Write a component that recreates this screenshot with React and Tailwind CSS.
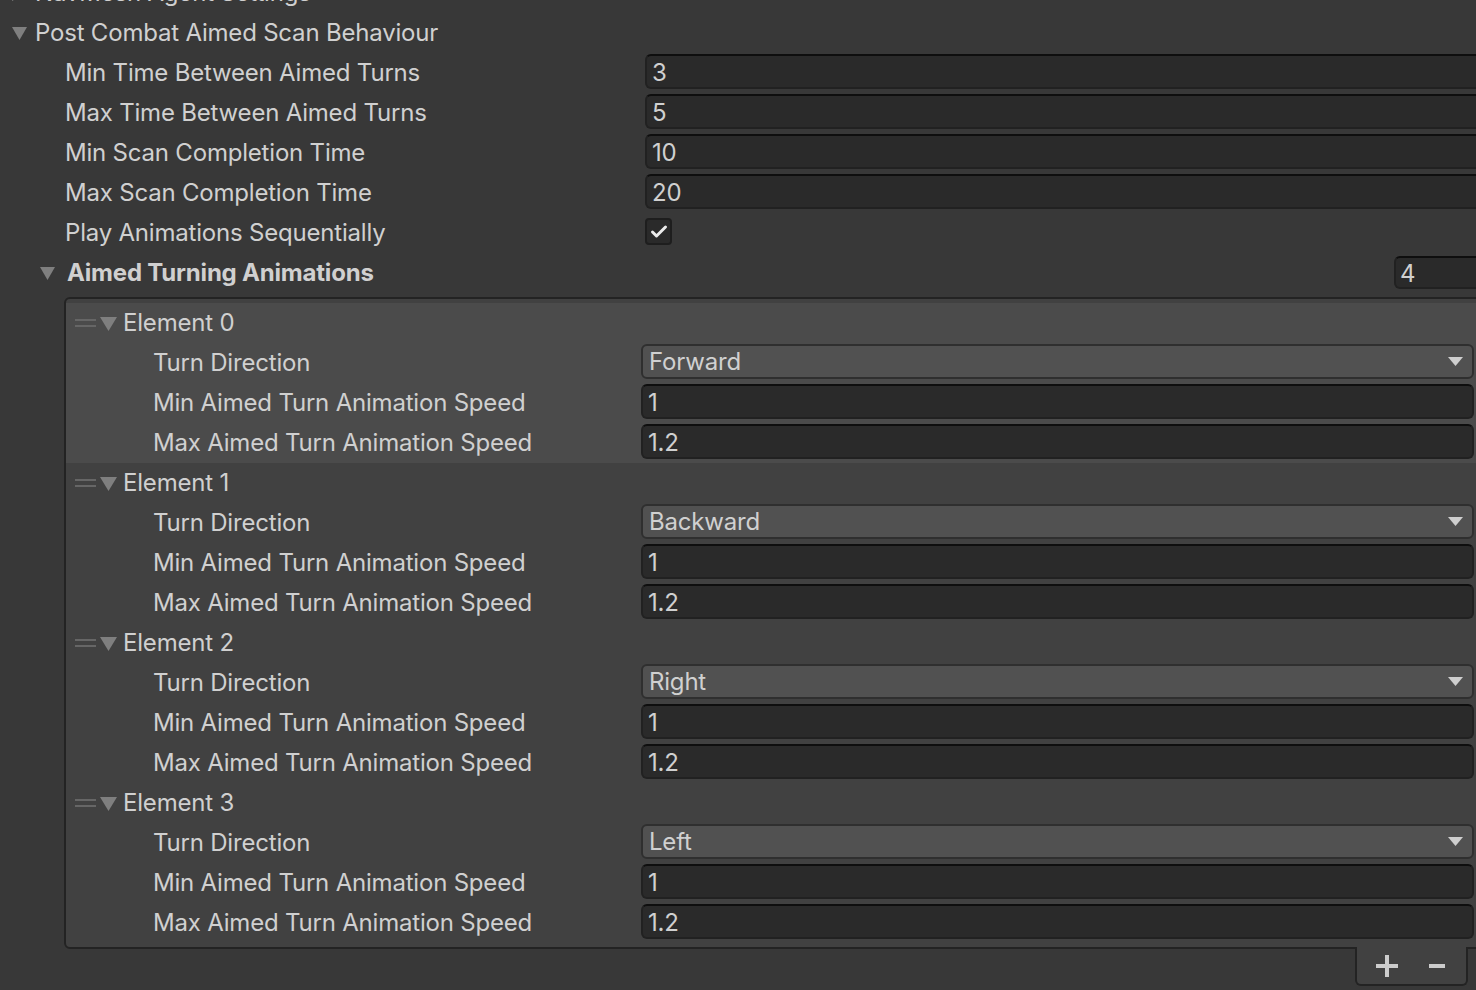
import React from "react";

const Tri = ({ className = "", w = 15, h = 13 }) => (
  <svg width={w} height={h} viewBox={`0 0 ${w} ${h}`} className={className}>
    <polygon points={`0,0 ${w},0 ${w / 2},${h}`} fill="#7f7f7f" />
  </svg>
);

const Handle = () => (
  <svg width="21" height="10" viewBox="0 0 21 10" className="shrink-0">
    <rect x="0" y="1" width="21" height="2" fill="#666666" />
    <rect x="0" y="7" width="21" height="2" fill="#666666" />
  </svg>
);

const Input = ({ value, className = "" }) => (
  <div
    className={
      "h-[35px] mt-[1px] rounded-[6px] bg-[#2a2a2a] border-2 border-[#212121] border-t-[#0e0e0e] pl-[5px] pt-[2px] flex items-center leading-none " +
      className
    }
  >
    {value}
  </div>
);

const Dropdown = ({ value }) => (
  <div className="h-[35px] mt-[1px] w-[833px] rounded-[6px] bg-[#515151] border-2 border-[#2f2f2f] pl-[6px] pr-[9px] flex items-center justify-between leading-none">
    <span className="pt-[1px]">{value}</span>
    <svg width="15" height="9" viewBox="0 0 15 9">
      <polygon points="0,0 15,0 7.5,9" fill="#cfcfcf" />
    </svg>
  </div>
);

const TopRow = ({ label, children }) => (
  <div className="h-[40px] flex items-start">
    <div className="w-[645px] shrink-0 pl-[65px] leading-[40px]">{label}</div>
    <div className="flex-1 -mr-[12px]">{children}</div>
  </div>
);

const ElemRow = ({ label, children }) => (
  <div className="h-[40px] flex items-start">
    <div className="w-[575px] shrink-0 pl-[87px] leading-[40px]">{label}</div>
    <div className="shrink-0">{children}</div>
  </div>
);

const Element = ({ idx, dir, selected }) => (
  <div className={selected ? "bg-[#4b4b4b]" : ""}>
    <div className="h-[40px] flex items-center">
      <div className="pl-[9px] flex items-center">
        <Handle />
        <Tri w={17} h={14} className="ml-[4px] mt-[1px]" />
        <span className="ml-[6px] leading-[40px]">Element {idx}</span>
      </div>
    </div>
    <ElemRow label="Turn Direction">
      <Dropdown value={dir} />
    </ElemRow>
    <ElemRow label="Min Aimed Turn Animation Speed">
      <Input value="1" className="w-[833px]" />
    </ElemRow>
    <ElemRow label="Max Aimed Turn Animation Speed">
      <Input value="1.2" className="w-[833px]" />
    </ElemRow>
  </div>
);

export default function App() {
  return (
    <div
      className="w-[1476px] h-[990px] bg-[#383838] overflow-hidden text-[24px] text-[#d0d0d0] tracking-[-0.2px]"
      style={{ fontFamily: "Inter, 'Noto Sans', sans-serif" }}
    >
      <div className="-mt-[27px]">
        <div className="h-[40px] flex items-center">
          <svg width="13" height="15" viewBox="0 0 13 15" className="ml-[12px]">
            <polygon points="0,0 13,7.5 0,15" fill="#7f7f7f" />
          </svg>
          <span className="ml-[10px] leading-[40px]">NavMesh Agent Settings</span>
        </div>
        <div className="h-[40px] flex items-center">
          <Tri className="ml-[12px] mt-[1px]" />
          <span className="ml-[8px] leading-[40px]">Post Combat Aimed Scan Behaviour</span>
        </div>
        <TopRow label="Min Time Between Aimed Turns">
          <Input value="3" />
        </TopRow>
        <TopRow label="Max Time Between Aimed Turns">
          <Input value="5" />
        </TopRow>
        <TopRow label="Min Scan Completion Time">
          <Input value="10" />
        </TopRow>
        <TopRow label="Max Scan Completion Time">
          <Input value="20" />
        </TopRow>
        <TopRow label="Play Animations Sequentially">
          <div className="mt-[5px] w-[27px] h-[27px] rounded-[4px] bg-[#2a2a2a] border-2 border-[#1e1e1e] flex items-center justify-center">
            <svg width="18" height="15" viewBox="0 0 18 15">
              <polyline
                points="2.5,8 6.5,12 15.5,3"
                fill="none"
                stroke="#ececec"
                strokeWidth="3"
                strokeLinecap="round"
                strokeLinejoin="round"
              />
            </svg>
          </div>
        </TopRow>
        <div className="h-[40px] flex items-start">
          <div className="flex items-center h-[40px] pl-[40px]">
            <Tri className="mt-[1px]" />
            <span className="ml-[12px] font-bold leading-[40px]">Aimed Turning Animations</span>
          </div>
          <div className="flex-1" />
          <div className="mt-[3px] h-[33px] w-[100px] -mr-[18px] rounded-[6px] bg-[#2a2a2a] border-2 border-[#212121] border-t-[#0e0e0e] pl-[4px] pt-[2px] flex items-center leading-none">
            4
          </div>
        </div>
        <div className="ml-[64px] -mr-[10px] mt-[4px] rounded-[6px] border-2 border-[#232323] bg-[#414141] py-[4px]">
          <Element idx={0} dir="Forward" selected />
          <Element idx={1} dir="Backward" />
          <Element idx={2} dir="Right" />
          <Element idx={3} dir="Left" />
        </div>
        <div className="flex justify-end pr-[8px]">
          <div className="-mt-[2px] w-[113px] h-[39px] bg-[#414141] border-2 border-t-0 border-[#232323] rounded-b-[6px] flex items-center pl-[19px]">
            <svg width="22" height="22" viewBox="0 0 22 22">
              <rect x="0" y="9" width="22" height="4" fill="#cccccc" />
              <rect x="9" y="0" width="4" height="22" fill="#cccccc" />
            </svg>
            <svg width="16" height="4" viewBox="0 0 16 4" className="ml-[31px]">
              <rect x="0" y="0" width="16" height="4" fill="#cccccc" />
            </svg>
          </div>
        </div>
      </div>
    </div>
  );
}
